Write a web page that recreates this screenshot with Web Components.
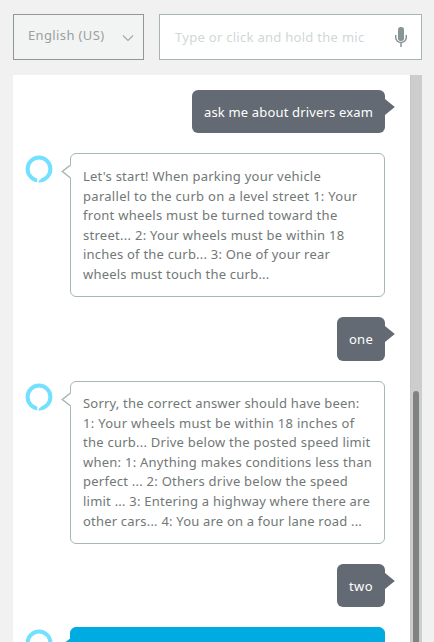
<!DOCTYPE html>
<html lang="en">
<head>
<meta charset="utf-8">
<title>Chat simulator</title>
<style>
html,body{margin:0;height:100%;overflow:hidden;background:#f1f1f1}
body{font-family:"Noto Sans","Open Sans",sans-serif;font-size:13px;color:#717876}
</style>
</head>
<body>
<chat-app></chat-app>
<script>
class Base extends HTMLElement{
  constructor(){super();this.attachShadow({mode:'open'}).innerHTML=this.view();}
}

/* One line of text, tracked to the width given in "w" */
customElements.define('text-line',class extends Base{
  view(){return `<style>:host{display:block;white-space:nowrap;line-height:inherit}span{display:inline-block}</style><span><slot></slot></span>`;}
  connectedCallback(){
    const s=this.shadowRoot.querySelector('span'),w=+this.getAttribute('w'),n=this.textContent.length;
    s.style.letterSpacing=((w-s.getBoundingClientRect().width)/n).toFixed(3)+'px';
    s.style.verticalAlign='top';
  }
});

customElements.define('language-select',class extends Base{
  view(){return `<style>
  :host{display:flex;box-sizing:border-box;width:131px;height:46px;border:1px solid #919796;background:#f2f4f4;color:#9b9f9d;align-items:center;justify-content:space-between;padding:0 9px 4px 14px;line-height:20px}
  svg{margin-top:5px}
  </style><slot></slot><svg width="12" height="8" viewBox="0 0 12 8" fill="none" stroke="#a2a9a8" stroke-width="1.1"><path d="M1 1.5 6 6.4 11 1.5"/></svg>`;}
});

customElements.define('message-input',class extends Base{
  view(){return `<style>
  :host{display:flex;box-sizing:border-box;width:263px;height:46px;border:1px solid #a6b4b4;background:#fff;color:#d0d7d7;align-items:center;justify-content:space-between;padding:0 14px 0 15px;line-height:20px}
  </style><slot></slot><svg width="12" height="22" viewBox="0 0 12 22"><rect x="3" y="1" width="6" height="14" rx="2.7" fill="#879596"/><path d="M.7 9v2.3a5.3 5.3 0 0 0 10.6 0V9M6 16.6V21" fill="none" stroke="#879596" stroke-width="1.5"/></svg>`;}
});

customElements.define('user-bubble',class extends Base{
  view(){return `<style>
  :host{display:block;position:relative;align-self:flex-end;box-sizing:border-box;height:43px;margin:0 25px 20px 0;padding:12px 12px 0;border-radius:6px;background:#646a73;color:#fff;line-height:20px}
  svg{position:absolute;left:100%;top:9px;margin-left:-1px}
  </style><slot></slot><svg width="11" height="16"><path d="M0 0h1L10.8 8 1 16H0z" fill="#646a73"/></svg>`;}
});

customElements.define('bot-message',class extends Base{
  view(){return `<style>
  :host{display:flex;align-items:flex-start;margin:0 25px 20px 12px}
  .ring{flex:none;width:28px;height:28px;margin-top:2px;margin-right:17px}
  .box{position:relative;flex:1;box-sizing:border-box;height:var(--h);border:1px solid #a6b7b5;border-radius:6px;background:#fff;padding:var(--pt,13px) 0 0 12px;line-height:19.6px}
  .tip{position:absolute;left:-10px;top:9px}
  .tip .f{fill:#fff}.tip .s{fill:none;stroke:#a6b7b5;stroke-width:1.5}
  :host([filled]) .box{background:#00abe1;border-color:#00abe1}
  :host([filled]) .tip .f{fill:#00abe1}
  :host([filled]) .tip .s{stroke:#00abe1}
  </style>
  <svg class="ring" viewBox="0 0 28 28"><circle cx="14" cy="14" r="11.4" fill="none" stroke="#74e0ff" stroke-width="4"/><path d="M12.2 23v5.2h1.1c0-2 .8-3.4 3.3-4.4l-1-1.4z" fill="#fff"/></svg>
  <div class="box"><svg class="tip" width="11" height="18"><path class="f" d="M11 1.5H10L1.2 8.5 10 15.5h1z"/><path class="s" d="M9.6 2 1.3 8.5 9.6 15"/></svg><slot></slot></div>`;}
});

customElements.define('chat-log',class extends Base{
  view(){return `<style>
  :host{display:flex;width:409px;height:567px;background:#fff;overflow:hidden}
  .list{flex:1;display:flex;flex-direction:column;padding-top:15px}
  .track{flex:none;box-sizing:border-box;width:12px;border-left:1px solid #c9c5bf;background:#cdcdcd;padding:316px 3px 0 2px}
  .thumb{height:300px;border-radius:3px;background:#7e8282}
  </style><div class="list"><slot></slot></div><div class="track"><div class="thumb"></div></div>`;}
});

customElements.define('chat-app',class extends Base{
  view(){return `<style>
  :host{display:flex;flex-direction:column;gap:15px;box-sizing:border-box;width:434px;height:642px;padding:14px 12px 0 13px;overflow:hidden}
  header{display:flex;gap:15px;flex:none}
  chat-log,user-bubble,bot-message{flex-shrink:0}
  </style>
  <header>
    <language-select><text-line w="76.5">English (US)</text-line></language-select>
    <message-input><text-line w="189.5">Type or click and hold the mic</text-line></message-input>
  </header>
  <chat-log>
    <user-bubble><text-line w="169">ask me about drivers exam</text-line></user-bubble>
    <bot-message style="--h:144px">
      <text-line w="238">Let's start! When parking your vehicle</text-line>
      <text-line w="274.5">parallel to the curb on a level street 1: Your</text-line>
      <text-line w="254.5">front wheels must be turned toward the</text-line>
      <text-line w="261.5">street... 2: Your wheels must be within 18</text-line>
      <text-line w="247">inches of the curb... 3: One of your rear</text-line>
      <text-line w="186.5">wheels must touch the curb...</text-line>
    </bot-message>
    <user-bubble style="height:44px"><text-line w="24">one</text-line></user-bubble>
    <bot-message style="--h:163px;--pt:12px">
      <text-line w="276.5">Sorry, the correct answer should have been:</text-line>
      <text-line w="271.5">1: Your wheels must be within 18 inches of</text-line>
      <text-line w="287.5">the curb... Drive below the posted speed limit</text-line>
      <text-line w="289">when: 1: Anything makes conditions less than</text-line>
      <text-line w="265">perfect ... 2: Others drive below the speed</text-line>
      <text-line w="287">limit ... 3: Entering a highway where there are</text-line>
      <text-line w="279">other cars... 4: You are on a four lane road ...</text-line>
    </bot-message>
    <user-bubble><text-line w="24">two</text-line></user-bubble>
    <bot-message filled style="--h:80px"></bot-message>
  </chat-log>`;}
});
</script>
</body>
</html>
